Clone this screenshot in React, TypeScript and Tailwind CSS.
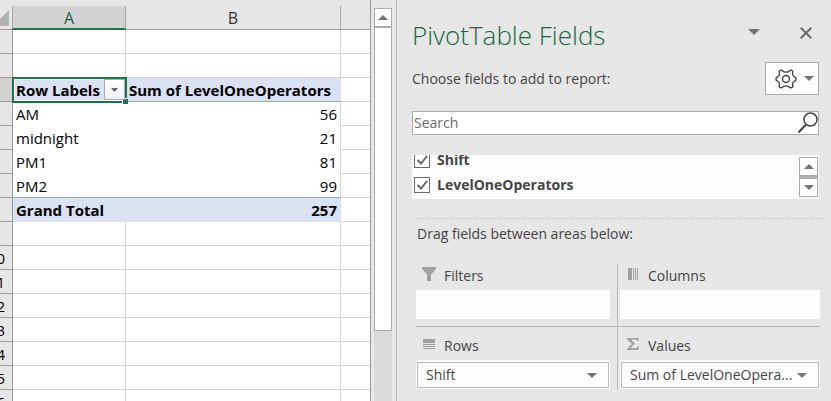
import { useState } from "react";
import type { ReactNode } from "react";

type Row = { label: string; value: string; kind: "head" | "body" | "last" | "total" | "blank" };

const blank: Row = { label: "", value: "", kind: "blank" };

const rows: Row[] = [
  blank,
  blank,
  { label: "Row Labels", value: "Sum of LevelOneOperators", kind: "head" },
  { label: "AM", value: "56", kind: "body" },
  { label: "midnight", value: "21", kind: "body" },
  { label: "PM1", value: "81", kind: "body" },
  { label: "PM2", value: "99", kind: "last" },
  { label: "Grand Total", value: "257", kind: "total" },
  ...Array.from({ length: 8 }, () => blank),
];

const cellA = {
  head: "z-10 border-b border-[#8ea9db] bg-[#d9e1f2] font-bold",
  body: "border-b border-white bg-white",
  last: "border-b border-[#8ea9db] bg-white",
  total: "border-b border-[#d9e1f2] bg-[#d9e1f2] font-bold",
  blank: "border-r border-b border-[#d4d4d4] bg-white",
};

const cellB = {
  head: "border-b border-[#8ea9db] bg-[#d9e1f2] font-bold text-left pl-[3px]",
  body: "border-r border-b border-r-[#d4d4d4] border-b-white bg-white text-right pr-[3px]",
  last: "border-r border-b border-r-[#d4d4d4] border-b-[#8ea9db] bg-white text-right pr-[3px]",
  total: "border-b border-[#d9e1f2] bg-[#d9e1f2] font-bold text-right pr-[4px]",
  blank: "border-r border-b border-[#d4d4d4] bg-white",
};

function Caret({ up = false, className = "" }: { up?: boolean; className?: string }) {
  return (
    <svg width="10" height="5" viewBox="0 0 10 5" className={`shrink-0 ${className}`} aria-hidden="true">
      <path d={up ? "M0 5 5 0l5 5z" : "M0 0h10L5 5z"} fill="currentColor" />
    </svg>
  );
}

function Sheet() {
  return (
    <table className="w-[371px] shrink-0 table-fixed border-separate border-spacing-0 self-start border-r border-[#9b9b9b] font-['Open_Sans','Noto_Sans',sans-serif] text-[15px] leading-[20px] text-black">
      <colgroup>
        <col className="w-[13px]" />
        <col className="w-[113px]" />
        <col className="w-[215px]" />
        <col />
      </colgroup>
      <thead>
        <tr className="h-[30px] text-[16px]">
          <td className="border-b border-[#9b9b9b] p-0 align-top">
            <svg width="9" height="26" viewBox="0 0 9 26" aria-hidden="true">
              <path d="M9 10v16H0v-7z" fill="#b1b1b1" />
            </svg>
          </td>
          <th scope="col" className="p-0 pt-[6px] font-normal">
            <div className="-ml-px h-6 border-x border-b-2 border-x-[#a6a6a6] border-b-[#217346] bg-[#d2d2d2] leading-[24px] text-[#1f5c3c]">A</div>
          </th>
          <th scope="col" className="border-b border-[#9b9b9b] p-0 pt-[6px] font-normal">
            <div className="h-[23px] border-r border-[#ababab] leading-[24px] text-[#333]">B</div>
          </th>
          <td className="border-b border-[#9b9b9b] p-0" />
        </tr>
      </thead>
      <tbody>
        {rows.map((row, i) => (
          <tr key={i} className="h-6">
            <th
              scope="row"
              className={`border-r border-b border-[#9b9b9b] p-0 font-normal ${row.kind === "head" ? "bg-[#d2d2d2]" : "bg-[#e6e6e6]"}`}
            >
              <div className="flex justify-end pr-[7px]">{i > 8 ? i + 1 : ""}</div>
            </th>
            <td className={`relative p-0 pl-[3px] ${cellA[row.kind]}`}>
              {row.label}
              {row.kind === "head" && (
                <>
                  <div className="absolute -top-px -right-px -bottom-[2px] -left-px border-2 border-[#217346]">
                    <div className="h-full border border-white" />
                  </div>
                  <div className="absolute -right-[2px] -bottom-[3px] size-[6px] border-t border-l border-white bg-[#217346]" />
                  <button
                    type="button"
                    aria-label="Filter row labels"
                    className="absolute top-px right-px flex h-[21px] w-[21px] items-center justify-center border border-[#a6acb8] bg-gradient-to-b from-white to-[#eef0f5] text-[#666]"
                  >
                    <svg width="7" height="4" viewBox="0 0 7 4" aria-hidden="true">
                      <path d="M0 0h7L3.5 4z" fill="currentColor" />
                    </svg>
                  </button>
                </>
              )}
            </td>
            <td className={`p-0 ${cellB[row.kind]}`}>{row.value}</td>
            <td className="border-b border-[#d4d4d4] bg-white p-0" />
          </tr>
        ))}
      </tbody>
    </table>
  );
}

function SheetScrollbar() {
  return (
    <div className="flex w-[26px] shrink-0 flex-col border-r border-[#b9b9b9] pt-2 pr-1 pl-[3px]">
      <button
        type="button"
        aria-label="Scroll up"
        className="flex h-5 items-center justify-center border border-b-2 border-[#ababab] bg-white text-[#737373]"
      >
        <Caret up />
      </button>
      <div className="flex-1 bg-[#dadada]">
        <div className="h-[303px] border border-t-0 border-[#ababab] bg-white" />
      </div>
    </div>
  );
}

function Field({ name }: { name: string }) {
  const [checked, setChecked] = useState(true);
  return (
    <label className="flex h-[25px] shrink-0 items-center gap-[7px] pl-[2px] font-bold text-[#444]">
      <span className="grid size-4 place-items-center">
        <input
          type="checkbox"
          checked={checked}
          onChange={(e) => setChecked(e.target.checked)}
          className="peer col-start-1 row-start-1 size-4 appearance-none border border-[#6a6a6a] bg-white"
        />
        <svg
          width="12"
          height="12"
          viewBox="0 0 12 12"
          className="pointer-events-none col-start-1 row-start-1 hidden peer-checked:block"
          aria-hidden="true"
        >
          <path d="M1.5 6 5 9.500 11 2" fill="none" stroke="#666" strokeWidth="2" />
        </svg>
      </span>
      {name}
    </label>
  );
}

function Area({ title, icon, item, className }: { title: string; icon: ReactNode; item?: string; className: string }) {
  return (
    <section className={className}>
      <h2 className="flex h-[26px] items-start gap-2 pl-[5px]">
        <span className="flex h-5 w-[15px] items-center justify-center text-[#a0a0a0]">{icon}</span>
        <span className="pt-[2px]">{title}</span>
      </h2>
      <div className="h-[29px] bg-[#fdfdfd] px-px py-[2px]">
        {item && (
          <button
            type="button"
            className="flex h-[26px] w-full items-center justify-between border border-[#b9b9b9] bg-[#fdfdfd] pr-[11px] pl-2"
          >
            <span className="truncate">{item}</span>
            <Caret className="text-[#737373]" />
          </button>
        )}
      </div>
    </section>
  );
}

function FieldsPane() {
  return (
    <aside className="min-w-0 flex-1 pr-3 pl-[15px] font-['Open_Sans','Noto_Sans',sans-serif] text-[14px] leading-[20px] text-[#444]">
      <header className="flex h-[62px] items-center pt-[8px] pr-[7px]">
        <h1 className="flex-1 text-[26px] leading-[32px] font-light text-[#1b663c]">PivotTable Fields</h1>
        <button type="button" aria-label="Pane options" className="mr-10 pb-[6px] text-[#737373]">
          <svg width="12" height="6" viewBox="0 0 12 6" aria-hidden="true">
            <path d="M0 0h12L6 6z" fill="currentColor" />
          </svg>
        </button>
        <button type="button" aria-label="Close" className="pb-1 text-[#6a6a6a]">
          <svg width="12" height="12" viewBox="0 0 12 12" aria-hidden="true">
            <path d="m.7.7 10.600 10.600M11.300.7.7 11.300" stroke="currentColor" strokeWidth="2" />
          </svg>
        </button>
      </header>

      <div className="flex items-center justify-between">
        <p>Choose fields to add to report:</p>
        <button
          type="button"
          aria-label="Tools"
          className="flex h-[33px] w-[54px] items-center justify-between border border-[#ababab] bg-[#fdfdfd] pr-1 pl-[9px] text-[#737373]"
        >
          <svg width="22" height="20" viewBox="0 0 22 20" fill="none" stroke="#444" strokeWidth="1.400" strokeLinejoin="round" aria-hidden="true">
            <path d="M6.200 1 8.600 2.600Q11 3.600 13.400 2.600L15.800 1 17.800 2.200 17.500 5Q17.900 7.300 19.500 7.900L20.900 8.800V11.200L19.500 12.100Q17.900 12.700 17.500 15L17.800 17.800 15.800 19 13.400 17.400Q11 16.400 8.600 17.400L6.200 19 4.200 17.800 4.500 15Q4.100 12.700 2.500 12.100L1.100 11.200V8.800L2.500 7.900Q4.100 7.300 4.500 5L4.200 2.200z" />
            <circle cx="11" cy="10" r="3.500" />
          </svg>
          <Caret />
        </button>
      </div>

      <div className="mt-4 flex h-[24px] border border-[#ababab] bg-white">
        <input
          type="search"
          aria-label="Search"
          placeholder="Search"
          className="min-w-0 flex-1 bg-transparent pl-px outline-none placeholder:text-[#6a6a6a]"
        />
        <svg width="20" height="22" viewBox="0 0 20 22" fill="none" stroke="#444" strokeWidth="1.500" className="shrink-0" aria-hidden="true">
          <circle cx="12.500" cy="7.500" r="6.500" />
          <path d="M8 12.500.5 20.500" strokeWidth="2" />
        </svg>
      </div>

      <div className="mt-5 flex h-[44px] justify-between overflow-hidden bg-[#fdfdfd] pr-px">
        <div className="flex flex-col justify-end pb-[2px]">
          <Field name="Shift" />
          <Field name="LevelOneOperators" />
        </div>
        <div className="my-[2px] flex w-[19px] flex-col gap-[2px] bg-[#b4b4b4] text-[#737373]">
          <button type="button" aria-label="Scroll fields up" className="flex flex-1 items-center justify-center border border-[#ababab] bg-white">
            <Caret up />
          </button>
          <button type="button" aria-label="Scroll fields down" className="flex flex-1 items-center justify-center border border-[#ababab] bg-white">
            <Caret />
          </button>
        </div>
      </div>

      <div className="mt-[19px] -mr-1 ml-[2px] h-px bg-[repeating-linear-gradient(to_right,#b9b9b9_0_1px,transparent_1px_3px)]" />
      <p className="mt-[5px] pl-[5px]">Drag fields between areas below:</p>

      <div className="mt-5 -mr-px ml-1 grid grid-cols-2">
        <Area
          title="Filters"
          className="border-r border-b border-[#b9b9b9] pr-[7px] pb-[7px]"
          icon={
            <svg width="14" height="14" viewBox="0 0 14 14" aria-hidden="true">
              <path d="M0 0h14v2L9 7.500V14H5V7.500L0 2z" fill="currentColor" />
            </svg>
          }
        />
        <Area
          title="Columns"
          className="border-b border-[#b9b9b9] pb-[7px] pl-[2px]"
          icon={
            <svg width="10" height="12" viewBox="0 0 10 12" aria-hidden="true">
              <path d="M0 0h4v12H0zM5 0h1v12H5zM7 0h1v12H7zM9 0h1v12H9z" fill="currentColor" />
            </svg>
          }
        />
        <Area
          title="Rows"
          item="Shift"
          className="border-r border-[#b9b9b9] pt-[7px] pr-[7px]"
          icon={
            <svg width="12" height="10" viewBox="0 0 12 10" aria-hidden="true">
              <path d="M0 0h12v4H0zM0 5h12v1H0zM0 7h12v1H0zM0 9h12v1H0z" fill="currentColor" />
            </svg>
          }
        />
        <Area
          title="Values"
          item="Sum of LevelOneOpera..."
          className="pt-[7px] pl-[2px]"
          icon={
            <svg width="12" height="12" viewBox="0 0 12 12" aria-hidden="true">
              <path d="M0 0h11.500v3h-1Q10 1.500 8.500 1.500H4L7.800 5.500 3.500 10H9Q10.500 10 11 8.500h1L11.500 12H0v-1L4.800 6 0 1z" fill="currentColor" />
            </svg>
          }
        />
      </div>
    </aside>
  );
}

export default function App() {
  return (
    <main className="flex h-screen overflow-hidden bg-[#e6e6e6]">
      <Sheet />
      <SheetScrollbar />
      <FieldsPane />
    </main>
  );
}
